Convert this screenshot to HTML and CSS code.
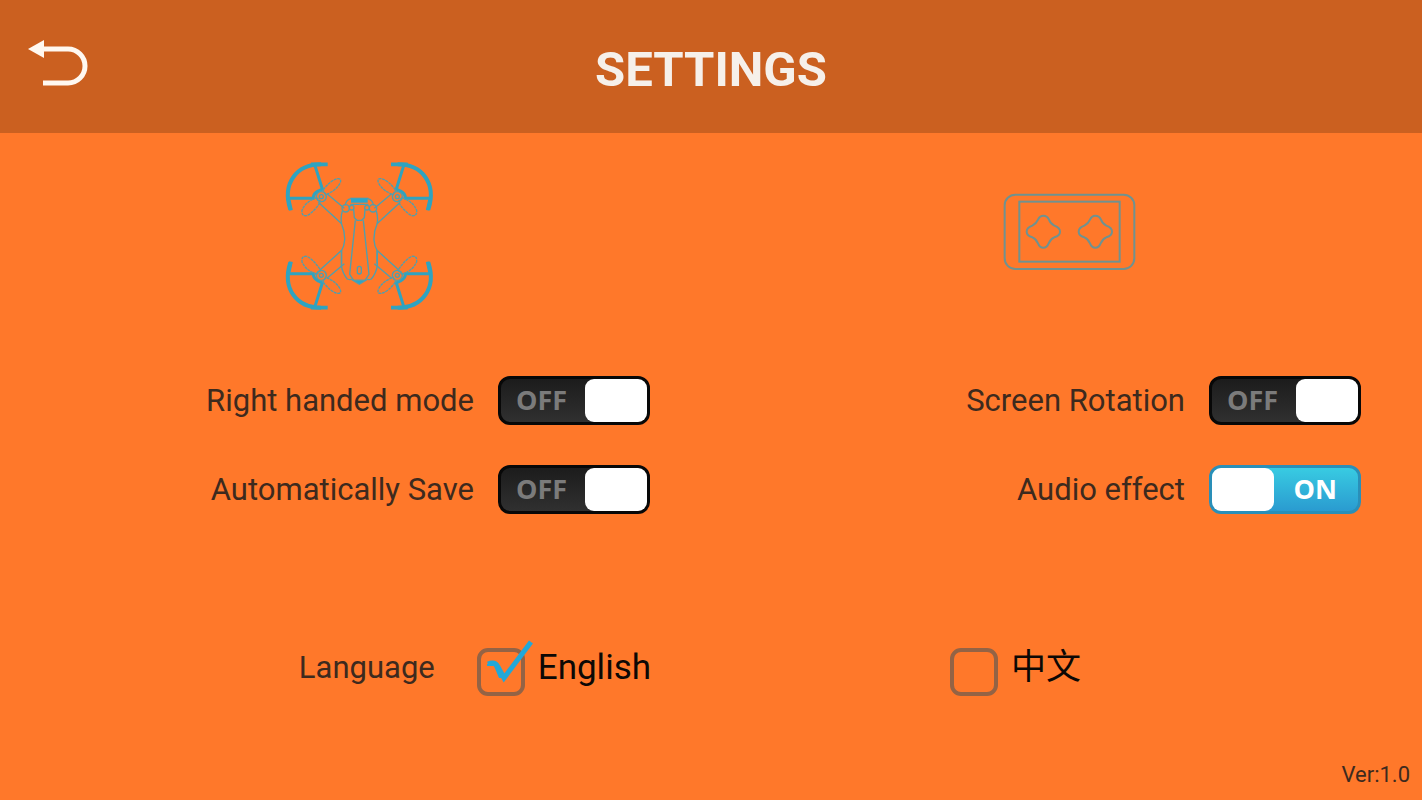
FILE: index.html
```
<!DOCTYPE html>
<html lang="en">
<head>
    <meta charset="UTF-8">
    <meta name="viewport" content="width=device-width, initial-scale=1.0">
    <title>Settings</title>
    <link rel="stylesheet" href="styles.css">
</head>
<body>
    <header class="top-bar">
        <button type="button" class="back" aria-label="Back">
            <svg width="60" height="48" viewBox="0 0 60 48">
                <path d="M0 10 16 1v18z" fill="#fff8f0"/>
                <path d="M14 10h26a17 17 0 0 1 0 34H15" fill="none" stroke="#fff8f0" stroke-width="5"/>
            </svg>
        </button>
        <h1>SETTINGS</h1>
    </header>

    <main>
        <section class="column">
            <div class="picture">
                <svg width="160" height="160" viewBox="0 0 480 480" fill="none" stroke="#4f9fae" stroke-width="4">
                    <defs>
                        <g id="rotor">
                            <path d="M34 164C8 84 54 28 126 28" stroke="#2fa3c0" stroke-width="12"/>
                            <path d="M96 28h50M28 130l8 36" stroke="#2fa3c0" stroke-width="11"/>
                            <path d="M108 32l22 70-12 6q-14 6-16 22l-72 0" stroke="#2fa3c0" stroke-width="9"/>
                            <g stroke-dasharray="9 2">
                                <path d="M132 105q22-28 42-34 16-2 9 14-12 22-43 34z"/>
                                <path d="M113 128q-34 12-44 38-2 18 14 16 20-8 42-42z"/>
                            </g>
                            <circle cx="127" cy="125" r="15"/>
                            <circle cx="127" cy="125" r="6"/>
                        </g>
                        <g id="half">
                            <use href="#rotor"/>
                            <use href="#rotor" transform="translate(0 486) scale(1 -1)"/>
                            <path d="M144 116l52 44M118 142l70 64"/>
                            <path d="M122 346l66-60M144 370l52-44M188 286v40"/>
                            <path d="M216 131q-14 3-18 20M190 168q-6 20-2 40 10 22 9 47-1 18-10 33v44q4 24 18 40 8 4 14 0"/>
                            <circle cx="200" cy="160" r="11"/>
                            <circle cx="218" cy="158" r="7"/>
                            <path d="M214 148h27M224 164l2 24 8 8h7M229 196l-17 162 12 18h17"/>
                        </g>
                    </defs>
                    <use href="#half"/>
                    <use href="#half" transform="translate(482 0) scale(-1 1)"/>
                    <path d="M214 130h54"/>
                    <path d="M216 137h50" stroke="#2aa5c9" stroke-width="12"/>
                    <rect x="235" y="334" width="12" height="23" rx="6"/>
                    <path d="M222 376h38l-19 12z" fill="#2aa5c9"/>
                </svg>
            </div>
            <label class="row">
                <span>Right handed mode</span>
                <span class="switch">
                    <input type="checkbox" role="switch">
                    <span class="state">OFF</span>
                </span>
            </label>
            <label class="row">
                <span>Automatically Save</span>
                <span class="switch">
                    <input type="checkbox" role="switch">
                    <span class="state">OFF</span>
                </span>
            </label>
        </section>

        <section class="column">
            <div class="picture">
                <svg width="150" height="100" viewBox="0 0 450 300" fill="none" stroke="#6f9290" stroke-width="6">
                    <rect x="29" y="29" width="389" height="223" rx="32"/>
                    <rect x="73" y="50" width="301" height="180"/>
                    <path id="pad" d="M145 92q12 0 17 12 4 12 16 18 17 6 17 18t-17 17q-12 5-17 18-5 13-16 13t-16-13q-5-13-17-18-17-5-17-17t17-18q12-6 17-18 5-12 16-12z"/>
                    <use href="#pad" x="156"/>
                </svg>
            </div>
            <label class="row">
                <span>Screen Rotation</span>
                <span class="switch">
                    <input type="checkbox" role="switch">
                    <span class="state">OFF</span>
                </span>
            </label>
            <label class="row">
                <span>Audio effect</span>
                <span class="switch on">
                    <input type="checkbox" role="switch" checked>
                    <span class="state">ON</span>
                </span>
            </label>
        </section>

        <div class="language" role="group" aria-labelledby="language">
            <span class="language-title" id="language">Language</span>
            <label class="choice">
                <span class="box">
                    <input type="checkbox" checked>
                    <svg class="tick" width="48" height="46" viewBox="0 0 48 46">
                        <path d="M1 24l7-2 9 16-4 0L8 26H1z" fill="#22a8d8"/>
                        <path d="M2 24q7-3 10 3l6 11L45 2" fill="none" stroke="#22a8d8" stroke-width="5"/>
                    </svg>
                </span>
                <span>English</span>
            </label>
        </div>
        <div class="language second">
            <label class="choice">
                <span class="box"><input type="checkbox"></span>
                <span lang="zh">中文</span>
            </label>
        </div>
    </main>

    <footer>Ver:1.0</footer>
</body>
</html>
```
FILE: styles.css
```
* {
    box-sizing: border-box;
    margin: 0;
    padding: 0;
}

body {
    min-height: 100vh;
    display: flex;
    flex-direction: column;
    background-color: #ff782a;
    color: #3d2a1e;
    font-family: Roboto, "Noto Sans CJK SC", sans-serif;
    font-size: 31px;
    line-height: 40px;
}

.top-bar {
    display: grid;
    grid-template-columns: 1fr auto 1fr;
    align-items: start;
    padding: 39px 28px 33px;
    background-color: #cb6020;
}

.back {
    justify-self: start;
    display: flex;
    border: none;
    background: none;
    cursor: pointer;
}

h1 {
    color: #f6f0ea;
    font-size: 49px;
    line-height: 61px;
}

main {
    flex: 1;
    display: grid;
    grid-template-columns: 1fr 1fr;
    align-content: start;
}

.column {
    display: flex;
    flex-direction: column;
    gap: 40px;
    padding-right: 61px;
}

.picture {
    display: flex;
    justify-content: center;
    align-items: center;
    height: 203px;
    padding-left: 68px;
}

.row {
    display: flex;
    justify-content: flex-end;
    align-items: center;
    gap: 24px;
}

.switch {
    display: grid;
    width: 152px;
    height: 49px;
}

.switch input {
    grid-area: 1 / 1;
    appearance: none;
    display: flex;
    justify-content: flex-end;
    border: 3px solid #080808;
    border-radius: 12px;
    background: linear-gradient(#1c1c1c, #303030);
    cursor: pointer;
}

.switch input::before {
    content: "";
    width: 62px;
    border-radius: 9px;
    background-color: #fff;
}

.switch input:checked {
    justify-content: flex-start;
    border-color: #2a8fb8;
    background: linear-gradient(#38cbe2, #2a9bd0);
}

.state {
    grid-area: 1 / 1;
    align-self: center;
    padding-left: 18px;
    padding-bottom: 2px;
    color: #7b7b7b;
    font-family: "Open Sans", sans-serif;
    font-size: 27px;
    font-weight: bold;
    pointer-events: none;
}

.on .state {
    justify-self: end;
    padding-right: 24px;
    color: #fff;
}

.language {
    display: flex;
    align-items: center;
    justify-content: flex-end;
    gap: 42px;
    margin-top: 126px;
    padding-right: 60px;
}

.second {
    justify-content: flex-start;
    padding-left: 239px;
}

.choice {
    display: flex;
    align-items: center;
    gap: 13px;
    color: #0c0805;
    font-size: 35px;
}

.box {
    display: grid;
    position: relative;
    padding-top: 8px;
}

.box input {
    appearance: none;
    width: 48px;
    height: 48px;
    border: 4px solid #946345;
    border-radius: 11px;
    cursor: pointer;
}

.tick {
    position: absolute;
    left: 9px;
    top: 0;
    pointer-events: none;
}

footer {
    padding: 0 12px 5px;
    font-size: 22px;
    text-align: right;
}
```
